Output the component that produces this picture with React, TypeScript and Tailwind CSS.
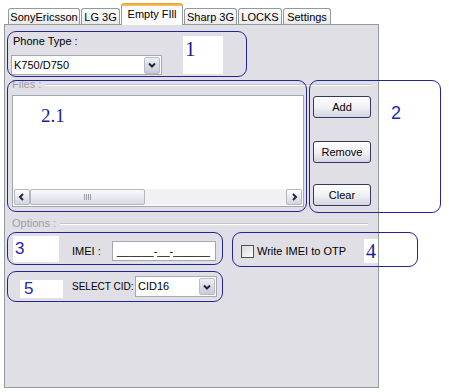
import type { ReactNode } from 'react'

const tabs = [
  { label: 'SonyEricsson', w: 'w-[72px]' },
  { label: 'LG 3G', w: 'w-[39px]' },
  { label: 'Empty FIll', w: 'w-[62px]', active: true },
  { label: 'Sharp 3G', w: 'w-[53px]' },
  { label: 'LOCKS', w: 'w-[44px]' },
  { label: 'Settings', w: 'w-[48px]' },
]

function Chevron({ dir = 'down' }: { dir?: 'down' | 'left' | 'right' }) {
  const d =
    dir === 'down' ? 'M1 1.5l3 3 3-3' : dir === 'left' ? 'M5 1L2 4l3 3' : 'M3 1l3 3-3 3'
  const size = dir === 'down' ? { w: 8, h: 6 } : { w: 8, h: 8 }
  return (
    <svg width={size.w} height={size.h} viewBox={`0 0 ${size.w} ${size.h}`}>
      <path d={d} fill="none" stroke="#23263f" strokeWidth="2" />
    </svg>
  )
}

function Combo({ value, className }: { value: string; className: string }) {
  return (
    <div className={`flex items-center border border-[#a3a8b4] bg-white ${className}`}>
      <span className="flex-1 pl-[2px]">{value}</span>
      <span className="mr-px flex h-[17px] w-[16px] items-center justify-center rounded-[2px] border border-[#b9bcc6] bg-gradient-to-b from-[#eef0f5] to-[#c8cbd6]">
        <Chevron />
      </span>
    </div>
  )
}

function Btn({ children, className = '' }: { children: ReactNode; className?: string }) {
  return (
    <div
      className={`flex h-[22px] w-[58px] items-center justify-center rounded-[3px] border border-[#333861] bg-gradient-to-b from-white via-[#f2f2f6] to-[#d3d5e0] ${className}`}
    >
      {children}
    </div>
  )
}

function Legend({ label, lineClass }: { label: string; lineClass: string }) {
  return (
    <div className="flex items-center pl-[7px]">
      <span className="text-[#9d9da6]">{label}</span>
      <div className={`ml-[4px] flex-1 border-t border-b border-t-[#c4c4cb] border-b-white ${lineClass}`} />
    </div>
  )
}

// blue annotation frames laid over the screenshot
const notes = [
  { box: 'left-[7px] top-[31px] w-[240px] h-[46px]' },
  { box: 'left-[7px] top-[80px] w-[300px] h-[132px]' },
  { box: 'left-[309px] top-[80px] w-[132px] h-[133px]' },
  { box: 'left-[7px] top-[232px] w-[216px] h-[33px]' },
  { box: 'left-[232px] top-[232px] w-[186px] h-[35px]' },
  { box: 'left-[7px] top-[271px] w-[216px] h-[31px]' },
]

export default function App() {
  return (
    <div className="relative h-[392px] w-[449px] overflow-hidden bg-white font-['Liberation_Sans',Arial,sans-serif] text-[11px] leading-[13px] text-black">
      <div className="flex h-[24px] items-end pl-[8px]">
        {tabs.map((t) =>
          t.active ? (
            <div
              key={t.label}
              className={`relative z-10 mb-[-1px] mr-px flex h-[22px] flex-col overflow-hidden rounded-t-[3px] border-x border-[#919b9c] bg-[#fcfcfe] ${t.w}`}
            >
              <div className="h-[3px] bg-gradient-to-b from-[#e89a2c] to-[#fcc85a]" />
              <div className="flex flex-1 items-center justify-center pb-[3px]">{t.label}</div>
            </div>
          ) : (
            <div
              key={t.label}
              className={`mr-px flex h-[16px] items-center justify-center rounded-t-[3px] border border-b-0 border-[#919b9c] bg-gradient-to-b from-white to-[#e9e9ea] pt-[2px] ${t.w}`}
            >
              {t.label}
            </div>
          )
        )}
      </div>

      <div className="ml-[4px] h-[364px] w-[375px] border border-[#919b9c] bg-[#dfdfe5]">
        <div className="pl-[8px] pt-[10px]">Phone Type :</div>
        <Combo value="K750/D750" className="ml-[6px] mt-[7px] h-[20px] w-[151px]" />

        <div className="mt-[3px]">
          <Legend label="Files :" lineClass="mr-[6px]" />
        </div>

        <div className="mt-[4px] flex">
          <div className="ml-[7px] flex h-[112px] w-[292px] flex-col justify-end border border-[#a0a6b0] bg-white p-px">
            <div className="flex h-[16px] items-stretch bg-[#f1f1f3]">
              <div className="flex w-[16px] items-center justify-center rounded-[2px] border border-[#b4b7c2] bg-gradient-to-b from-white to-[#d2d4de]">
                <Chevron dir="left" />
              </div>
              <div className="flex w-[115px] items-center justify-center gap-[1px] rounded-[2px] border border-[#b4b7c2] bg-gradient-to-b from-[#fafafc] to-[#d9dbe3]">
                <span className="h-[6px] w-px bg-[#9a9ca8]" />
                <span className="h-[6px] w-px bg-[#9a9ca8]" />
                <span className="h-[6px] w-px bg-[#9a9ca8]" />
                <span className="h-[6px] w-px bg-[#9a9ca8]" />
              </div>
              <div className="flex-1" />
              <div className="flex w-[16px] items-center justify-center rounded-[2px] border border-[#b4b7c2] bg-gradient-to-b from-white to-[#d2d4de]">
                <Chevron dir="right" />
              </div>
            </div>
          </div>
          <div className="ml-[9px] flex flex-col">
            <Btn className="mt-px">Add</Btn>
            <Btn className="mt-[23px]">Remove</Btn>
            <Btn className="mt-[21px]">Clear</Btn>
          </div>
        </div>

        <div className="mt-[10px]">
          <Legend label="Options :" lineClass="mr-[10px]" />
        </div>

        <div className="mt-[11px] flex h-[20px] items-center pl-[67px]">
          <span className="w-[40px] whitespace-nowrap">IMEI :</span>
          <div className="flex h-[20px] w-[104px] items-center border border-[#a3a8b4] bg-white pl-[4px]">
            ______-__-______
          </div>
          <span className="ml-[25px] h-[13px] w-[13px] border border-[#3f516b] bg-gradient-to-br from-[#d8d8d4] to-white" />
          <span className="ml-[3px] whitespace-nowrap">Write IMEI to OTP</span>
        </div>

        <div className="mt-[15px] flex h-[21px] items-center pl-[67px]">
          <span className="w-[63px] whitespace-nowrap text-[10px]">SELECT CID:</span>
          <Combo value="CID16" className="h-[21px] w-[82px]" />
        </div>
      </div>

      {notes.map((n, i) => (
        <div
          key={i}
          className={`pointer-events-none absolute rounded-[9px] border border-[#24249a] ${n.box}`}
        />
      ))}

      <div className="absolute left-[183px] top-[36px] flex h-[38px] w-[40px] items-start bg-white pl-[2px] pt-[2px] font-['Liberation_Serif',serif] text-[21px] leading-[22px] text-[#1c1c8a]">
        1
      </div>
      <div className="absolute left-[41px] top-[106px] font-['Liberation_Serif',serif] text-[19px] leading-[20px] text-[#1c1c9a]">
        2.1
      </div>
      <div className="absolute left-[391px] top-[103px] text-[18px] leading-[20px] text-[#2424b0]">2</div>
      <div className="absolute left-[13px] top-[236px] flex h-[26px] w-[46px] items-center bg-white pl-[2px] text-[17px] leading-[20px] text-[#2424b0]">
        3
      </div>
      <div className="absolute left-[364px] top-[239px] flex h-[24px] w-[14px] items-center justify-center bg-white font-['Liberation_Serif',serif] text-[20px] leading-[20px] text-[#1c1c9a]">
        4
      </div>
      <div className="absolute left-[20px] top-[280px] flex h-[18px] w-[43px] items-center bg-white pl-[4px] text-[17px] leading-[20px] text-[#2424b0]">
        5
      </div>
    </div>
  )
}
